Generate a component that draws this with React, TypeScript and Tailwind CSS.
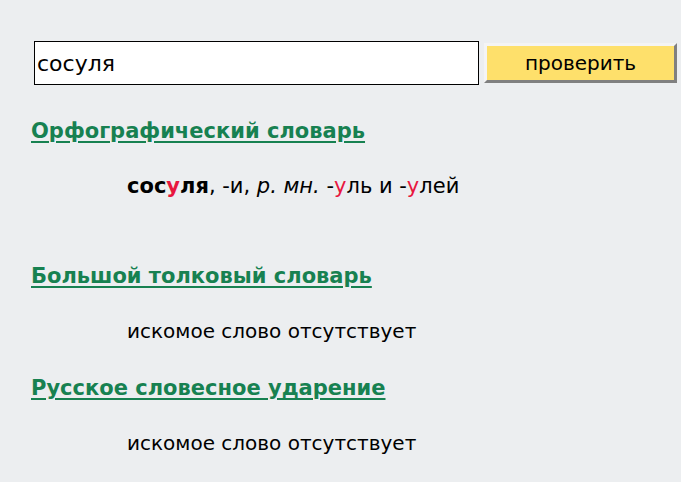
import type { ReactNode } from 'react'

const RESULTS: { title: string; body: ReactNode }[] = [
  {
    title: 'Орфографический словарь',
    body: (
      <>
        <b>
          сос<span className="text-[#e8173f]">у</span>ля
        </b>
        , -и, <i>р. мн.</i> -<span className="text-[#e8173f]">у</span>ль и -
        <span className="text-[#e8173f]">у</span>лей
      </>
    ),
  },
  { title: 'Большой толковый словарь', body: 'искомое слово отсутствует' },
  { title: 'Русское словесное ударение', body: 'искомое слово отсутствует' },
]

export default function App() {
  return (
    <div className="h-[482px] w-[681px] overflow-hidden bg-[#eceef0] font-['DejaVu_Sans',sans-serif] text-black">
      <form
        className="flex items-center gap-[5px] pl-[34px] pt-[41px]"
        onSubmit={(e) => e.preventDefault()}
      >
        <input
          defaultValue="сосуля"
          className="h-[44px] w-[445px] border border-black bg-white px-[2px] text-[22px] outline-none"
        />
        <button
          type="submit"
          className="h-[40px] w-[193px] border-[3px] border-t-[#f4f4f4] border-l-[#f4f4f4] border-r-[#808080] border-b-[#808080] bg-[#fee06b] text-[20px]"
        >
          проверить
        </button>
      </form>

      <div className="flex flex-col pl-[31px] pt-[32px]">
        {RESULTS.map((r, i) => (
          <section key={r.title} className={i === 0 ? '' : i === 1 ? 'pt-[62px]' : 'pt-[29px]'}>
            <a
              href="#"
              className="block w-fit text-[21px] leading-[28px] font-bold text-[#178151] underline decoration-2 underline-offset-[3px]"
            >
              {r.title}
            </a>
            <p className={`pl-[96px] pt-[27px] leading-[28px] ${i === 0 ? 'text-[21px]' : 'text-[20px]'}`}>
              {r.body}
            </p>
          </section>
        ))}
      </div>
    </div>
  )
}
